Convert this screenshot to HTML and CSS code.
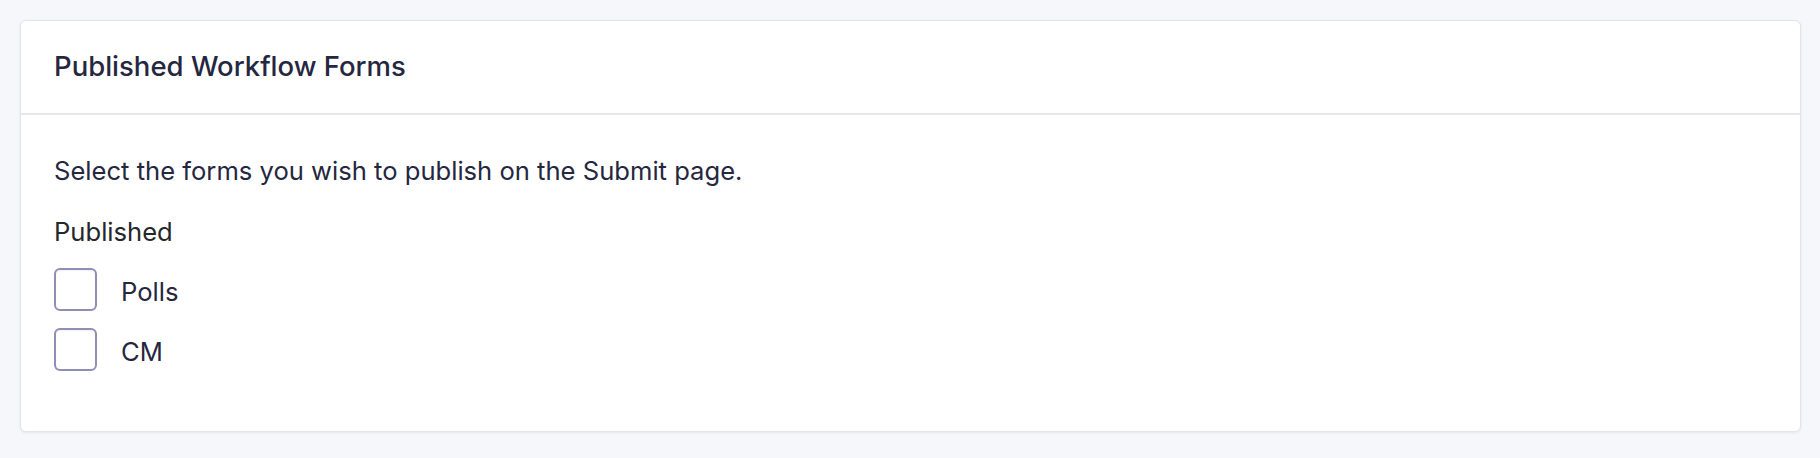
FILE: index.html
```html
<!DOCTYPE html>
<html lang="en">
<head>
<meta charset="utf-8">
<title>Published Workflow Forms</title>
<link rel="stylesheet" href="styles.css">
</head>
<body>
<main class="page">
  <section class="card">
    <header class="card-header">
      <h2 class="card-title">Published Workflow Forms</h2>
    </header>
    <div class="card-body">
      <p class="intro">Select the forms you wish to publish on the Submit page.</p>
      <div class="field-label">Published</div>
      <ul class="options">
        <li class="option">
          <span class="checkbox"></span>
          <span class="option-label">Polls</span>
        </li>
        <li class="option">
          <span class="checkbox"></span>
          <span class="option-label">CM</span>
        </li>
      </ul>
    </div>
  </section>
</main>
</body>
</html>
```
FILE: styles.css
```css
* { box-sizing: border-box; }
html, body {
  margin: 0;
  padding: 0;
  background: #f6f7fb;
}
body {
  font-family: Inter, "Noto Sans", "Liberation Sans", sans-serif;
  color: #25273f;
}
.page {
  padding: 20px 19px 26px 20px;
}
.card {
  background: #ffffff;
  border: 1px solid #e3e3ed;
  border-radius: 6px;
  box-shadow: 0 1px 3px rgba(40, 40, 90, 0.08);
}
.card-header {
  height: 94px;
  display: flex;
  align-items: center;
  padding: 0 33px;
  border-bottom: 2px solid #e7e7f0;
}
.card-title {
  margin: 0;
  font-size: 27.5px;
  font-weight: 450;
  line-height: 1;
  color: #25273f;
}
.card-body {
  padding: 36px 33px 60px 33px;
  display: flex;
  flex-direction: column;
}
.intro {
  margin: 0;
  font-size: 25.6px;
  line-height: 39px;
  color: #25273f;
}
.field-label {
  margin-top: 22px;
  font-size: 25.6px;
  line-height: 39px;
  color: #26272c;
}
.options {
  list-style: none;
  margin: 17px 0 0 0;
  padding: 0;
  display: flex;
  flex-direction: column;
  gap: 17px;
}
.option {
  display: flex;
  align-items: center;
  gap: 24px;
  height: 43px;
}
.checkbox {
  width: 43px;
  height: 43px;
  flex: none;
  border: 2px solid #908eb4;
  border-radius: 6px;
  background: #ffffff;
  box-shadow: inset 0 1px 2px rgba(40, 40, 90, 0.06);
}
.option-label {
  padding-top: 3px;
  font-size: 25.6px;
  line-height: 39px;
  color: #25273f;
}
```
